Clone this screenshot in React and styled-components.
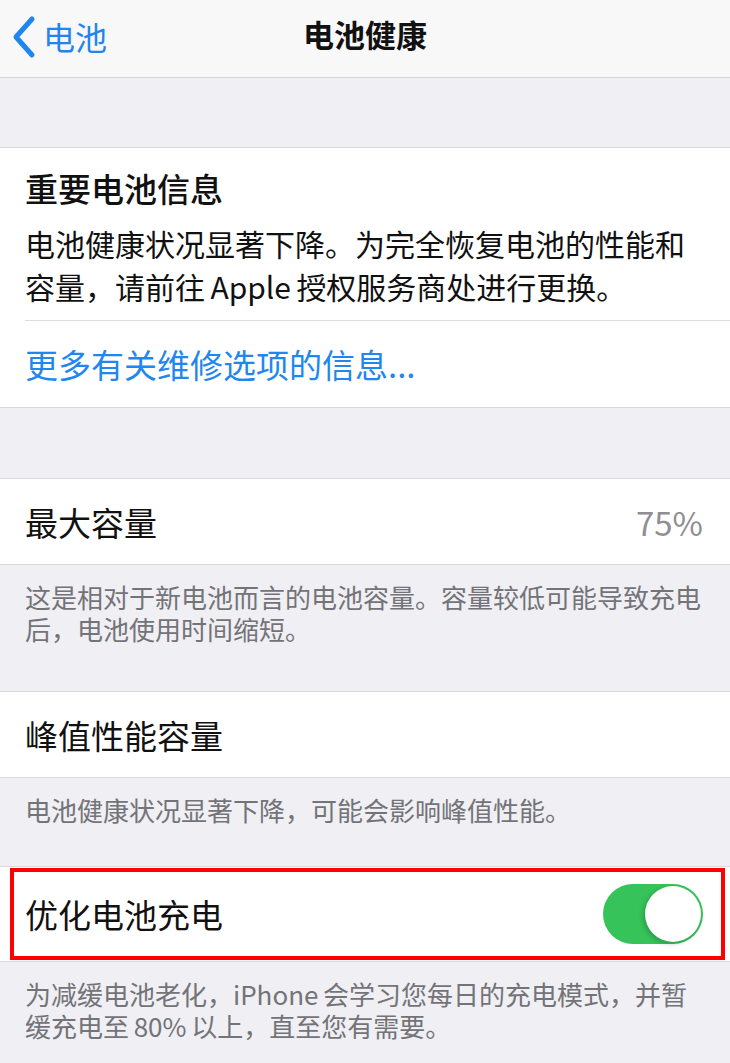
import React from 'react';
import styled, { createGlobalStyle } from 'styled-components';

const GlobalStyle = createGlobalStyle`
  html, body {
    margin: 0;
    padding: 0;
    background: #efeff4;
  }
  body {
    font-family: "Noto Sans CJK SC", "Noto Sans", sans-serif;
    -webkit-font-smoothing: antialiased;
  }
`;

const BackChevron = () => (
  <svg width="26" height="44" viewBox="0 0 26 44">
    <polyline
      points="21,4 5,22 21,40"
      fill="none"
      stroke="#1e85f1"
      strokeWidth="5"
      strokeLinecap="round"
      strokeLinejoin="round"
    />
  </svg>
);

const App = () => {
  return (
    <Page>
      <GlobalStyle />
      <NavBar>
        <BackButton>
          <BackChevron />
          <span>电池</span>
        </BackButton>
        <NavTitle>电池健康</NavTitle>
        <div />
      </NavBar>

      <Spacer $h={69} />

      <Group>
        <InfoBlock>
          <InfoTitle>重要电池信息</InfoTitle>
          <InfoText>
            电池健康状况显著下降。为完全恢复电池的性能和
            <br />
            容量，请前往<Gap />Apple<Gap />授权服务商处进行更换。
          </InfoText>
        </InfoBlock>
        <Separator />
        <LinkRow>更多有关维修选项的信息...</LinkRow>
      </Group>

      <Spacer $h={70} />

      <Group>
        <Row>
          <Label>最大容量</Label>
          <Value>75%</Value>
        </Row>
      </Group>
      <Footer $bottom={46}>
        这是相对于新电池而言的电池容量。容量较低可能导致充电
        <br />
        后，电池使用时间缩短。
      </Footer>

      <Group>
        <Row>
          <Label>峰值性能容量</Label>
        </Row>
      </Group>
      <Footer $bottom={40}>电池健康状况显著下降，可能会影响峰值性能。</Footer>

      <Group>
        <Row $h={94}>
          <Label>优化电池充电</Label>
          <Toggle>
            <Knob />
          </Toggle>
          <Highlight />
        </Row>
      </Group>
      <Footer $bottom={20}>
        为减缓电池老化，iPhone<Gap />会学习您每日的充电模式，并暂
        <br />
        缓充电至<Gap />80%<Gap />以上，直至您有需要。
      </Footer>
    </Page>
  );
};

export default App;

const Page = styled.div`
  width: 730px;
  height: 1063px;
  overflow: hidden;
  background: #efeff4;
`;

const NavBar = styled.div`
  height: 77px;
  background: #f8f8f8;
  border-bottom: 1px solid #d7d7db;
  display: grid;
  grid-template-columns: 1fr auto 1fr;
  align-items: center;
`;

const BackButton = styled.div`
  display: flex;
  align-items: center;
  gap: 6px;
  padding-left: 11px;
  margin-top: -4px;
  color: #1e85f1;
  font-size: 32px;
  line-height: 1;

  span {
    margin-top: -2px;
  }
`;

const NavTitle = styled.div`
  font-size: 31px;
  font-weight: 600;
  color: #111;
  margin-top: -10px;
`;

const Spacer = styled.div`
  height: ${(p) => p.$h}px;
`;

const Gap = styled.span`
  display: inline-block;
  width: 0.18em;
`;

const Group = styled.div`
  background: #fff;
  border-top: 1px solid #d9d9de;
  border-bottom: 1px solid #d9d9de;
`;

const InfoBlock = styled.div`
  padding: 19px 25px 12px;
`;

const InfoTitle = styled.div`
  font-size: 33px;
  font-weight: 500;
  line-height: 43px;
  color: #111;
  margin-bottom: 12px;
`;

const InfoText = styled.div`
  font-size: 30px;
  line-height: 43px;
  color: #111;
  white-space: nowrap;
`;

const Separator = styled.div`
  height: 1px;
  margin-left: 25px;
  background: #dcdce0;
`;

const LinkRow = styled.div`
  height: 86px;
  display: flex;
  align-items: center;
  padding: 0 25px;
  font-size: 33px;
  color: #1f87ee;
`;

const Row = styled.div`
  position: relative;
  height: ${(p) => p.$h || 85}px;
  display: flex;
  align-items: center;
  justify-content: space-between;
  padding: 0 27px 0 25px;
`;

const Label = styled.div`
  font-size: 33px;
  color: #111;
`;

const Value = styled.div`
  font-size: 33px;
  color: #8e8e93;
`;

const Footer = styled.div`
  padding: 16px 0 ${(p) => p.$bottom}px 25px;
  font-size: 26px;
  line-height: 32px;
  color: #737378;
  white-space: nowrap;
`;

const Toggle = styled.div`
  width: 100px;
  height: 60px;
  border-radius: 30px;
  background: #35c35a;
  display: flex;
  align-items: center;
  justify-content: flex-end;
  padding: 2px;
  box-sizing: border-box;
`;

const Knob = styled.div`
  width: 56px;
  height: 56px;
  border-radius: 50%;
  background: #fff;
  box-shadow: -2px 2px 5px rgba(0, 0, 0, 0.2);
`;

const Highlight = styled.div`
  position: absolute;
  top: 1px;
  bottom: 1px;
  left: 10px;
  right: 5px;
  border: 4px solid #f00;
  pointer-events: none;
`;
